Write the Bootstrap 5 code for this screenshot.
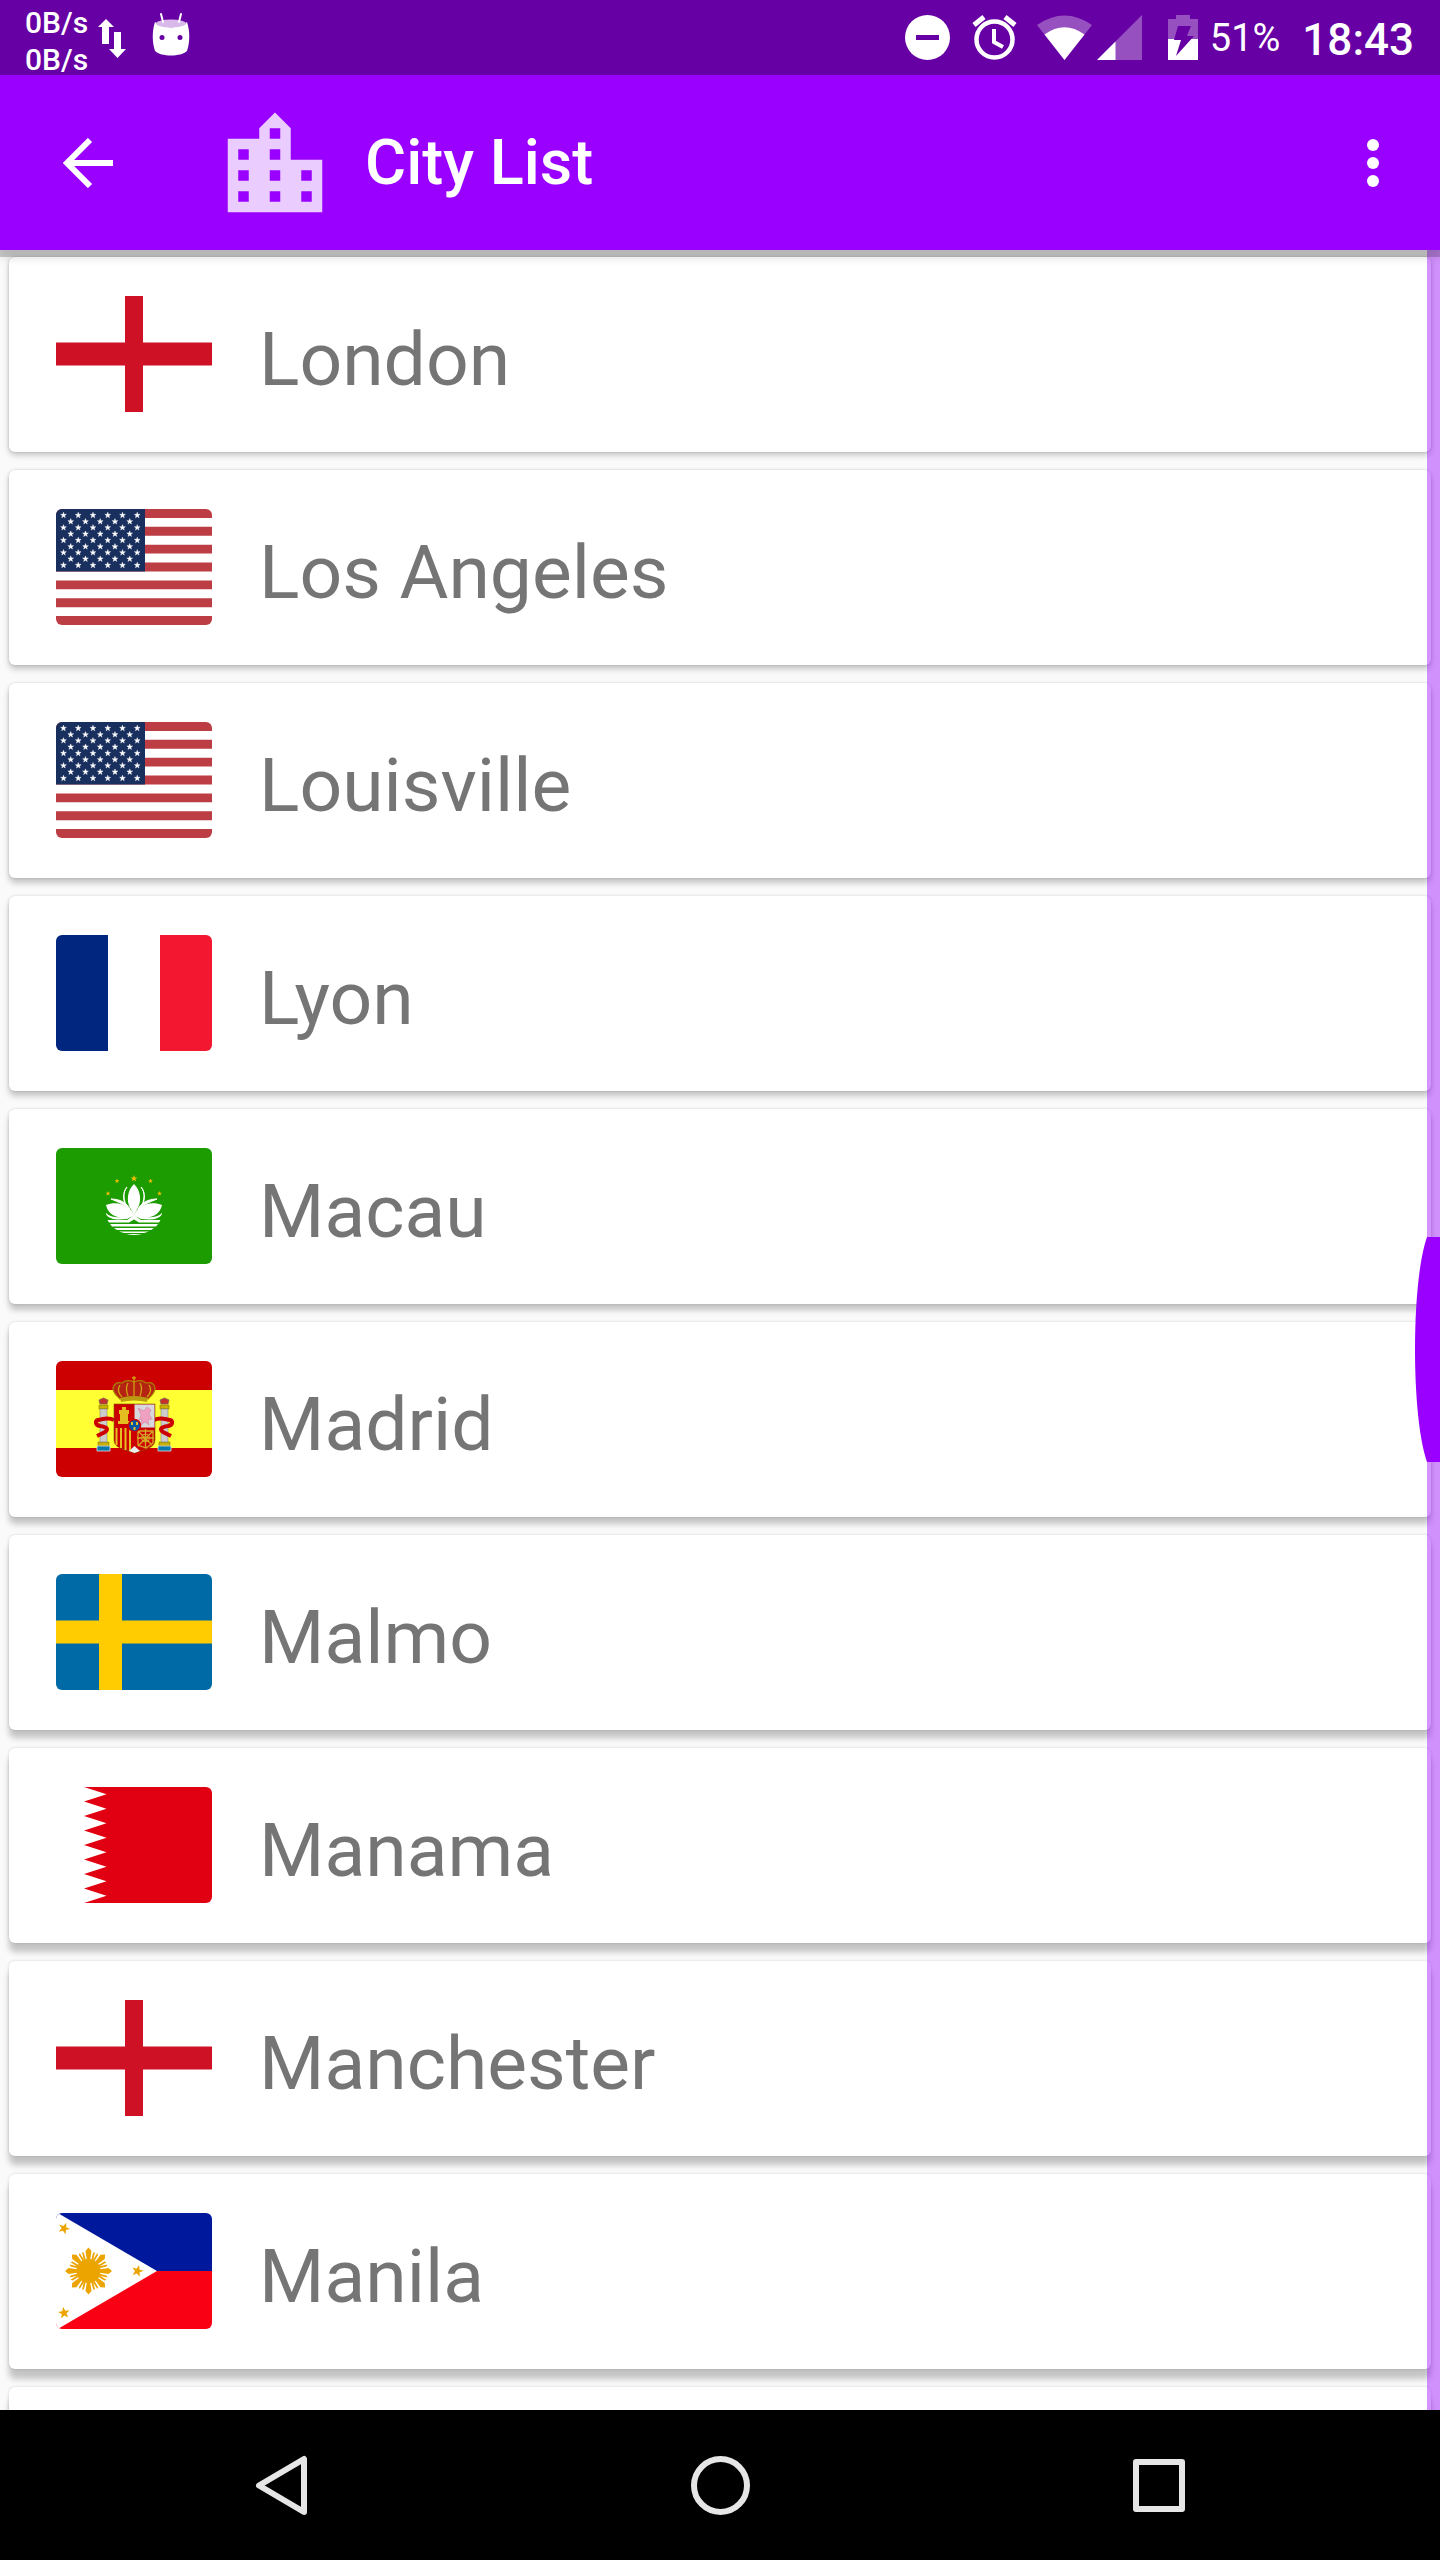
<!DOCTYPE html>
<html lang="en">
<head>
<meta charset="utf-8">
<meta name="viewport" content="width=device-width, initial-scale=1">
<title>City List</title>
<link rel="stylesheet" href="https://cdn.jsdelivr.net/npm/bootstrap@5.3.0/dist/css/bootstrap.min.css">
<style>
  body { font-family: Roboto, "Liberation Sans", sans-serif; background: #fafafa; }
  svg { display: block; flex: none; }
  .screen { height: 100vh; overflow: hidden; }
  .status { height: 75px; background: #6600a4; padding: 0 26px 0 25px; }
  .speed { font-size: 30px; line-height: 37px; font-weight: 500; padding-top: 4px; }
  .battery-text { font-size: 38px; line-height: 76px; }
  .clock { font-size: 44px; line-height: 80px; font-weight: 500; padding-left: 22px; }
  .appbar { height: 175px; background: #9900ff; padding: 0 55px 0 56px; box-shadow: 0 7px 0 rgba(0,0,0,.19), 0 9px 8px rgba(0,0,0,.1); z-index: 3; }
  .appbar h1 { font-size: 63px; line-height: 80px; font-weight: 500; }
  .skyline { margin: 0 27px 0 92px; }
  .city-list { gap: 18px; padding: 7px 9px 0; }
  .city { height: 195px; border: 0; border-radius: 6px; padding: 0 47px 1px; gap: 47px; color: #757575;
    box-shadow: 0 var(--drop) 6px rgba(0,0,0,.22), 0 0 3px rgba(0,0,0,.16); }
  .city:hover { color: #757575; }
  .city-name { font-size: 75px; line-height: 90px; padding-top: 10px; }
  .rounded-flag { border-radius: 6px; }
  .track { width: 13px; background: rgba(153,0,255,.42); z-index: 1; }
  .thumb { top: 987px; width: 25px; height: 225px; z-index: 2; }
  .navkeys { height: 150px; }
</style>
<script src="https://cdn.jsdelivr.net/npm/bootstrap@5.3.0/dist/js/bootstrap.bundle.min.js"></script>
</head>
<body>
<svg width="0" height="0" class="position-absolute" aria-hidden="true">
  <defs>
    <path id="star" d="M0-10 2.4-3.2 9.5-3.1 3.8 1.2 5.9 8.1 0 4-5.9 8.1-3.8 1.2-9.5-3.1-2.4-3.2z"/>
    <g id="starRowA"><use href="#star" x="0"/><use href="#star" x="49"/><use href="#star" x="98"/><use href="#star" x="147"/><use href="#star" x="196"/><use href="#star" x="245"/></g>
    <g id="starRowB"><use href="#star" x="24"/><use href="#star" x="73"/><use href="#star" x="122"/><use href="#star" x="171"/><use href="#star" x="220"/></g>
    <symbol id="england" viewBox="0 0 156 116"><path fill="#fff" d="M0 0h156v116H0z"/><path fill="#ce1124" d="M69 0h18v46.500h69v23H87V116H69V69.500H0v-23h69z"/></symbol>
    <symbol id="usa" viewBox="0 0 156 116"><path fill="#fff" d="M0 0h156v116H0z"/>
      <path stroke="#bd3d44" stroke-width="8.920" d="M0 4.460h156M0 22.300h156M0 40.150h156M0 58h156M0 75.850h156M0 93.700h156M0 111.540h156"/>
      <path fill="#192f5d" d="M0 0h89v62.460H0z"/>
      <g fill="#fff" stroke="#fff" stroke-width="1.500" transform="translate(7.500 6.300) scale(.301)"><use href="#starRowA"/><use href="#starRowB" y="21"/><use href="#starRowA" y="41"/><use href="#starRowB" y="62"/><use href="#starRowA" y="83"/><use href="#starRowB" y="104"/><use href="#starRowA" y="124"/><use href="#starRowB" y="145"/><use href="#starRowA" y="166"/></g></symbol>
    <symbol id="france" viewBox="0 0 156 116"><path fill="#fff" d="M0 0h156v116H0z"/><path fill="#00267f" d="M0 0h52v116H0z"/><path fill="#f31830" d="M104 0h52v116h-52z"/></symbol>
    <symbol id="macau" viewBox="0 0 156 116"><path fill="#1c9c00" d="M0 0h156v116H0z"/>
      <g fill="#f9be00"><use href="#star" transform="translate(78 30.500) scale(.35)"/><use href="#star" transform="translate(61 33) scale(.26)"/><use href="#star" transform="translate(94.500 33) scale(.26)"/><use href="#star" transform="translate(52 45.500) scale(.26)"/><use href="#star" transform="translate(103.500 45.500) scale(.26)"/></g>
      <g id="petals" fill="#fff"><path d="M78.200 36c-7 6-8 17-4 24l4.200 8z"/><path d="M71 39c-5 6-3 14 0 20-4-5-5-14 0-20z" stroke="#fff"/><path d="M55 51c9 0 16 4 19 10-4-4-12-7-19-10z" stroke="#fff"/><path d="M50 57c13-5 26 2 28 11-9 3-25 3-28-11z"/><path d="M50 65c6 6 18 5 27 1l1 1-7 4c-9 1-18 1-21-5z"/></g>
      <use href="#petals" transform="translate(156 0) scale(-1 1)"/>
      <path fill="#fff" d="M51.500 72H71l7-5 7 5h19.500l-1.500 2.500H83l-5-3-5 3H53zM54 76h48l-2 2.500H56zM58 80h40l-3 2H61zM63 83.500h30l-5 1.500H68zM70 86h16q-8 2-16 0z"/></symbol>
    <symbol id="spain" viewBox="0 0 156 116"><path fill="#c00" d="M0 0h156v116H0z"/><path fill="#ff3" d="M0 29h156v58H0z"/>
      <g id="pillar"><path fill="#c8b100" stroke="#7a6500" stroke-width=".5" d="M43 44h9v4h-9zM42 81h11v4H42z"/><path fill="#ccc" stroke="#777" stroke-width=".5" d="M44 48h7v33h-7z"/><path fill="#c8302e" stroke="#765" stroke-width=".8" d="M44 43l-1-4 4.500-2 4.500 2-1 4z"/><path fill="#0879a8" stroke="#dde" stroke-width=".8" d="M41 85h13v5H41z"/><path fill="none" stroke="#c00" stroke-width="4" d="M58 59c-6-3-10-1-16 0-3 1-3 5 2 6 7 1 9 3 5 6l-8 4"/></g>
      <use href="#pillar" transform="translate(156 0) scale(-1 1)"/>
      <path fill="#c00" stroke="#7a5a00" stroke-width=".6" d="M58 43h41v36c0 8-9 9-20.500 13C67 88 58 87 58 79z"/>
      <path fill="#d8d8dc" d="M78.500 43.500h20v23h-20z"/><path fill="#f0a0c0" stroke="#c8809c" stroke-width=".5" d="M82 47l6 3 3-4 4 3-2 4 3 5-4 1 1 5-4-3-4 3 1-6-3 1 2-5z"/>
      <path fill="#e4bd20" d="M63 49h3v-3h4v3h3v4h-1v7h2v3H62v-3h2v-7h-1z"/>
      <path stroke="#e4bd20" stroke-width="2" d="M60.500 67v17M65 67v20M69.500 67v22M74 67v23"/>
      <path fill="none" stroke="#d5a928" stroke-width="1.300" d="M82 70h15v12l-7 5-8-3zM82 70l14 14M97 70L82 85M89.500 68v19M81 77h17"/><circle cx="89.500" cy="77" r="4" fill="none" stroke="#d5a928"/>
      <path fill="#eee" d="M73 90l5.500-5 5.500 5-5.500 2z"/><circle cx="78.500" cy="64.500" r="6" fill="#0055a4" stroke="#c00" stroke-width="1.500"/><path fill="#e4bd20" d="M75 61h2v3h-2zM80 61h2v3h-2zM77.500 66h2v3h-2z"/>
      <path fill="#b52412" stroke="#a88000" stroke-width="1.200" d="M64 38q-7-6-7-11 2-7 9-5 5-4 12-1 7-3 12 1 8-2 9 5 0 5-7 11-14-4-28 0z"/><path fill="none" stroke="#d0a010" stroke-width="1.300" d="M66 36q-6-6-2-12M72 35q-3-8 0-13M78 21v14M84 35q3-8 0-13M91 36q6-6 2-12M78 15v6M76 17h4"/><path fill="#b99a10" d="M64 37q14-4 28 0l-1 4q-13-3-26 0z"/></symbol>
    <symbol id="sweden" viewBox="0 0 156 116"><path fill="#006aa7" d="M0 0h156v116H0z"/><path fill="#fecc00" d="M43 0h23v46.500h90v23H66V116H43V69.500H0v-23h43z"/></symbol>
    <symbol id="bahrain" viewBox="0 0 156 116"><path fill="#fff" d="M0 0h156v116H0z"/><path fill="#e10011" d="M156 0H28l22.500 7.250L28 14.500l22.500 7.250L28 29l22.500 7.250L28 43.500l22.500 7.250L28 58l22.500 7.250L28 72.500l22.500 7.250L28 87l22.500 7.250L28 101.500l22.500 7.250L28 116h128z"/></symbol>
    <symbol id="philippines" viewBox="0 0 156 116"><path fill="#00189b" d="M0 0h156v58H0z"/><path fill="#fa0014" d="M0 58h156v58H0z"/><path fill="#fff" d="M0-1l101 59L0 117z"/>
      <g fill="#eba400"><circle cx="32.500" cy="58" r="12"/>
        <g id="rays"><path d="M31 48l-1.500-10 3-3.500 3 3.500-1.500 10zM31 68l-1.500 10 3 3.500 3-3.500-1.500-10zM28 48l-2-9 2 1 2 8zM37 48l2-9-2 1-2 8zM28 68l-2 9 2-1 2-8zM37 68l2 9-2-1-2-8z"/></g>
        <use href="#rays" transform="rotate(45 32.500 58)"/><use href="#rays" transform="rotate(90 32.500 58)"/><use href="#rays" transform="rotate(135 32.500 58)"/>
        <use href="#star" transform="translate(8 15.500) rotate(22) scale(.62)"/><use href="#star" transform="translate(8 100) rotate(-8) scale(.62)"/><use href="#star" transform="translate(81.500 58) rotate(15) scale(.62)"/></g></symbol>
  </defs>
</svg>
<div class="screen d-flex flex-column">
  <div class="status d-flex text-white justify-content-between flex-shrink-0">
    <div class="d-flex">
      <div class="speed"><div>0B/s</div><div>0B/s</div></div>
      <svg class="ms-2" width="30" height="75" viewBox="-1 0 30 75" fill="#fff"><path d="M9 19l8 8h-5v17H5V27H1zM17 32h7v17h5l-8.500 9L12 49h5z"/></svg>
      <svg class="ms-4" width="38" height="75" viewBox="-2 0 38 75" overflow="visible"><path fill="#fff" d="M3 22c8 7 24 7 32 0 3 9 3 20 0 29-6 6-26 6-32 0-3-9-3-20 0-29z"/><ellipse cx="19" cy="23.500" rx="15" ry="4" fill="#d9b8ea"/><path stroke="#fff" stroke-width="2" stroke-linecap="round" d="M9 14l2 8M29 14l-2 8"/><circle cx="10" cy="37.500" r="2.500" fill="#6600a4"/><circle cx="28" cy="37.500" r="2.500" fill="#6600a4"/></svg>
    </div>
    <div class="d-flex">
      <svg width="305" height="75" viewBox="905 0 305 75">
        <circle cx="927.500" cy="37.500" r="22.500" fill="#fff"/><path fill="#6600a4" d="M916 35h23v5h-23z"/>
        <circle cx="994.500" cy="39.500" r="18" fill="none" stroke="#fff" stroke-width="4.500"/><path fill="none" stroke="#fff" stroke-width="4" d="M994 29v13l9 5"/><path stroke="#fff" stroke-width="5" d="M974 25l10-8M1015 25l-10-8"/>
        <path fill="#9750bf" d="M1037 25q27.500-19 55 0l-27.500 35z"/><path fill="#fff" d="M1044.500 34.500q20-14.500 40 0L1064.500 60z"/>
        <path fill="#9750bf" d="M1142 15v45h-45z"/><path fill="#fff" d="M1115.500 41.500V60H1097z"/>
        <path fill="#9750bf" d="M1168 19h8v-4h14v4h8v20h-30z"/><path fill="#fff" d="M1168 39h30v21h-30z"/><path fill="#6600a4" d="M1178 26h13l-4 10h7l-18 20 5-16h-7z"/>
      </svg>
      <div class="battery-text">51%</div>
      <div class="clock">18:43</div>
    </div>
  </div>
  <header class="appbar d-flex align-items-center text-white position-relative flex-shrink-0">
    <button type="button" class="btn p-0 border-0" aria-label="Back"><svg width="64" height="50" viewBox="0 0 64 50"><path fill="none" stroke="#fff" stroke-width="6" d="M57 25H11M34 2L11 25l23 23"/></svg></button>
    <svg class="skyline" width="126" height="126" viewBox="0 -.4 24 24"><path fill="#ebccff" d="M15 11V5l-3-3-3 3v2H3v14h18V11zM7 19H5v-2h2zm0-4H5v-2h2zm0-4H5V9h2zm6 8h-2v-2h2zm0-4h-2v-2h2zm0-4h-2V9h2zm0-4h-2V5h2zm6 12h-2v-2h2zm0-4h-2v-2h2z"/></svg>
    <h1 class="m-0">City List</h1>
    <button type="button" class="btn p-0 border-0 ms-auto" aria-label="More options"><svg width="24" height="50" viewBox="0 0 24 50" fill="#fff"><circle cx="12" cy="7" r="6"/><circle cx="12" cy="25" r="6"/><circle cx="12" cy="43" r="6"/></svg></button>
  </header>
  <main class="flex-grow-1 overflow-hidden position-relative">
    <div class="city-list d-flex flex-column" id="cities"></div>
    <div class="track position-absolute top-0 bottom-0 end-0"></div>
    <svg class="thumb position-absolute end-0" viewBox="0 0 25 225"><path fill="#9900ff" d="M25 0H12C-4 45-4 180 12 225h13z"/></svg>
  </main>
  <nav class="navkeys bg-black d-flex flex-shrink-0 justify-content-center" aria-label="System">
    <svg class="w-100" height="150" viewBox="0 0 1440 150" fill="none" stroke="#e6e6e6" stroke-width="6" stroke-linejoin="round"><path d="M304 49v53l-45-26.500z"/><circle cx="720.500" cy="75.500" r="26.500"/><path d="M1136 52h46v47h-46z"/></svg>
  </nav>
</div>
<script>
  const cities = [["London","england"],["Los Angeles","usa"],["Louisville","usa"],["Lyon","france"],["Macau","macau"],["Madrid","spain"],["Malmo","sweden"],["Manama","bahrain"],["Manchester","england"],["Manila","philippines"],["",""]];
  document.getElementById("cities").innerHTML = cities.map(([name, flag], i) =>
    `<a href="#" class="city card flex-row align-items-center text-decoration-none flex-shrink-0" style="--drop:${3 + Math.round(i * 0.8)}px">` +
    (flag ? `<svg class="rounded-flag" width="156" height="116" aria-hidden="true"><use href="#${flag}"/></svg>` : "") +
    `<span class="city-name">${name}</span></a>`).join("");
</script>
</body>
</html>
